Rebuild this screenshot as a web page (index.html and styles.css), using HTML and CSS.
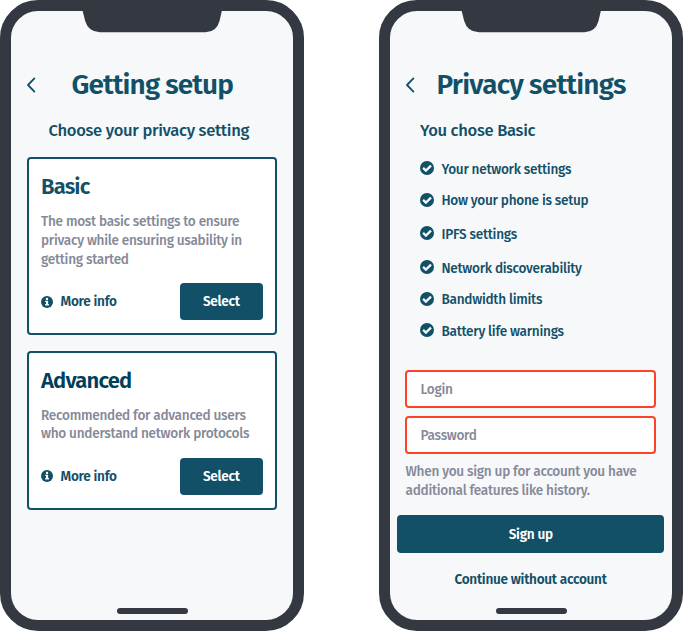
FILE: index.html
```html
<!DOCTYPE html>
<html lang="en">
<head>
<meta charset="utf-8">
<title>Privacy setup</title>
<link rel="stylesheet" href="styles.css">
</head>
<body>
<svg class="defs" width="0" height="0">
  <symbol id="back" viewBox="0 0 10 16"><path d="M8.4 1.4 2 8l6.400 6.600" fill="none" stroke="#125068" stroke-width="1.8" stroke-linecap="round" stroke-linejoin="round"/></symbol>
  <symbol id="info" viewBox="0 0 12 12"><circle cx="6" cy="6" r="6" fill="#125068"/><circle cx="6" cy="2.9" r="1.2" fill="#fff"/><path d="M4.200 4.700h2.900v3.400h.8v1.400H4.200V8.100h.8V6.100h-.8z" fill="#fff"/></symbol>
  <symbol id="check" viewBox="0 0 14 14"><circle cx="7" cy="7" r="7" fill="#125068"/><path d="m3.100 6.900 2.800 2.700 5.100-5" fill="none" stroke="#f7f8fa" stroke-width="2.300"/></symbol>
  <symbol id="notch" viewBox="0 0 140 22"><path d="M.7 0h139.100l-2.300 10Q134.500 21.200 123.500 21.200H18Q6.500 21.200 3.200 10Z" fill="#343840"/></symbol>
</svg>
<main class="board">
  <section class="phone">
    <svg class="notch"><use href="#notch"/></svg>
    <header class="head"><svg class="back"><use href="#back"/></svg><h1 class="title title-setup">Getting setup</h1></header>
    <p class="lead lead-center">Choose your privacy setting</p>
    <article class="card card-basic">
      <h2 class="name">Basic</h2>
      <p class="copy">The most basic settings to ensure<br>privacy while ensuring usability in<br>getting started</p>
      <div class="actions"><span class="more"><svg class="info"><use href="#info"/></svg>More info</span><button class="btn">Select</button></div>
    </article>
    <article class="card card-advanced">
      <h2 class="name name-dark">Advanced</h2>
      <p class="copy">Recommended for advanced users<br>who understand network protocols</p>
      <div class="actions"><span class="more"><svg class="info"><use href="#info"/></svg>More info</span><button class="btn">Select</button></div>
    </article>
    <div class="home"></div>
  </section>
  <section class="phone">
    <svg class="notch"><use href="#notch"/></svg>
    <header class="head"><svg class="back"><use href="#back"/></svg><h1 class="title title-privacy">Privacy settings</h1></header>
    <p class="lead lead-left">You chose Basic</p>
    <ul class="list">
      <li><svg class="check"><use href="#check"/></svg>Your network settings</li>
      <li><svg class="check"><use href="#check"/></svg>How your phone is setup</li>
      <li><svg class="check"><use href="#check"/></svg>IPFS settings</li>
      <li><svg class="check"><use href="#check"/></svg>Network discoverability</li>
      <li><svg class="check"><use href="#check"/></svg>Bandwidth limits</li>
      <li><svg class="check"><use href="#check"/></svg>Battery life warnings</li>
    </ul>
    <div class="form">
      <div class="field">Login</div>
      <div class="field">Password</div>
      <p class="help">When you sign up for account you have<br>additional features like history.</p>
    </div>
    <button class="btn btn-wide">Sign up</button>
    <p class="skip">Continue without account</p>
    <div class="home"></div>
  </section>
</main>
</body>
</html>
```
FILE: styles.css
```css
* { box-sizing: border-box; }
body { margin: 0; background: #fff; overflow: hidden; font-family: "Fira Sans", "Noto Sans", sans-serif; font-size: 13.600px; color: #125068; }
h1, h2, p, ul { margin: 0; padding: 0; }
p, li, span, button, .field { letter-spacing: -0.02em; }
svg { display: block; flex: none; }
.defs { position: absolute; }
.board { display: flex; gap: 75.300px; width: 683px; }
.phone { position: relative; flex: none; width: 303.700px; height: 631px; border: 11px solid #343840; border-radius: 38px; background: #f7f8fa; }
.notch { position: absolute; left: 71px; top: 0; width: 140px; height: 22px; }
.head { display: flex; align-items: center; height: 36px; margin-top: 56px; padding-left: 15px; }
.back { width: 10px; height: 16px; }
.title { font-size: 28px; line-height: 36px; font-weight: 600; white-space: nowrap; }
.title-setup { margin-left: 35.500px; letter-spacing: -0.032em; }
.title-privacy { margin-left: 21.500px; letter-spacing: -0.027em; }
.lead { font-size: 16.600px; line-height: 22px; font-weight: 500; letter-spacing: -0.019em; margin-top: 16px; white-space: nowrap; }
.lead-center { padding-left: 37.500px; }
.lead-left { padding-left: 30px; }
.card { width: 250.500px; margin-left: 15.500px; padding: 16px 12.500px 0; border: 2px solid #125068; border-radius: 4px; background: #fff; }
.card-basic { height: 178px; margin-top: 16px; }
.card-advanced { height: 159.500px; margin-top: 15.500px; }
.name { font-size: 22px; line-height: 24px; font-weight: 600; letter-spacing: -0.038em; }
.name-dark { color: #003f5a; }
.copy { margin-top: 14.200px; line-height: 18.800px; font-weight: 500; color: #858998; white-space: nowrap; }
.actions { display: flex; justify-content: space-between; align-items: center; margin-top: 13.300px; }
.more { display: flex; align-items: center; gap: 7.500px; font-weight: 600; }
.info { width: 12px; height: 12px; }
.btn { width: 82.500px; height: 37.500px; padding: 0; border: 0; border-radius: 4px; background: #125068; color: #fff; font: 600 13.600px "Fira Sans", "Noto Sans", sans-serif; }
.list { display: grid; grid-template-rows: 31.400px 33.500px 34px 31.500px 31.500px 20px; margin-top: 19px; padding-left: 30px; list-style: none; font-weight: 500; line-height: 20px; }
.list li { display: flex; gap: 7.500px; height: 20px; }
.check { width: 14px; height: 14px; margin-top: 1.300px; }
.form { width: 251px; margin: 28px 0 0 15px; }
.field { height: 38px; margin-bottom: 7.700px; padding-left: 13.500px; border: 2px solid #ff4128; border-radius: 4px; background: #fff; color: #858998; line-height: 36px; font-weight: 500; }
.help { padding: 1px 0 0 .5px; line-height: 19px; font-weight: 500; color: #858998; white-space: nowrap; }
.btn-wide { display: block; width: 266.500px; margin: 15px 0 0 7.500px; }
.skip { margin: 17.500px 0 0 64.500px; line-height: 20px; font-weight: 600; }
.home { position: absolute; left: 106px; bottom: 6.500px; width: 71px; height: 5.500px; border-radius: 3px; background: #343840; }
```
